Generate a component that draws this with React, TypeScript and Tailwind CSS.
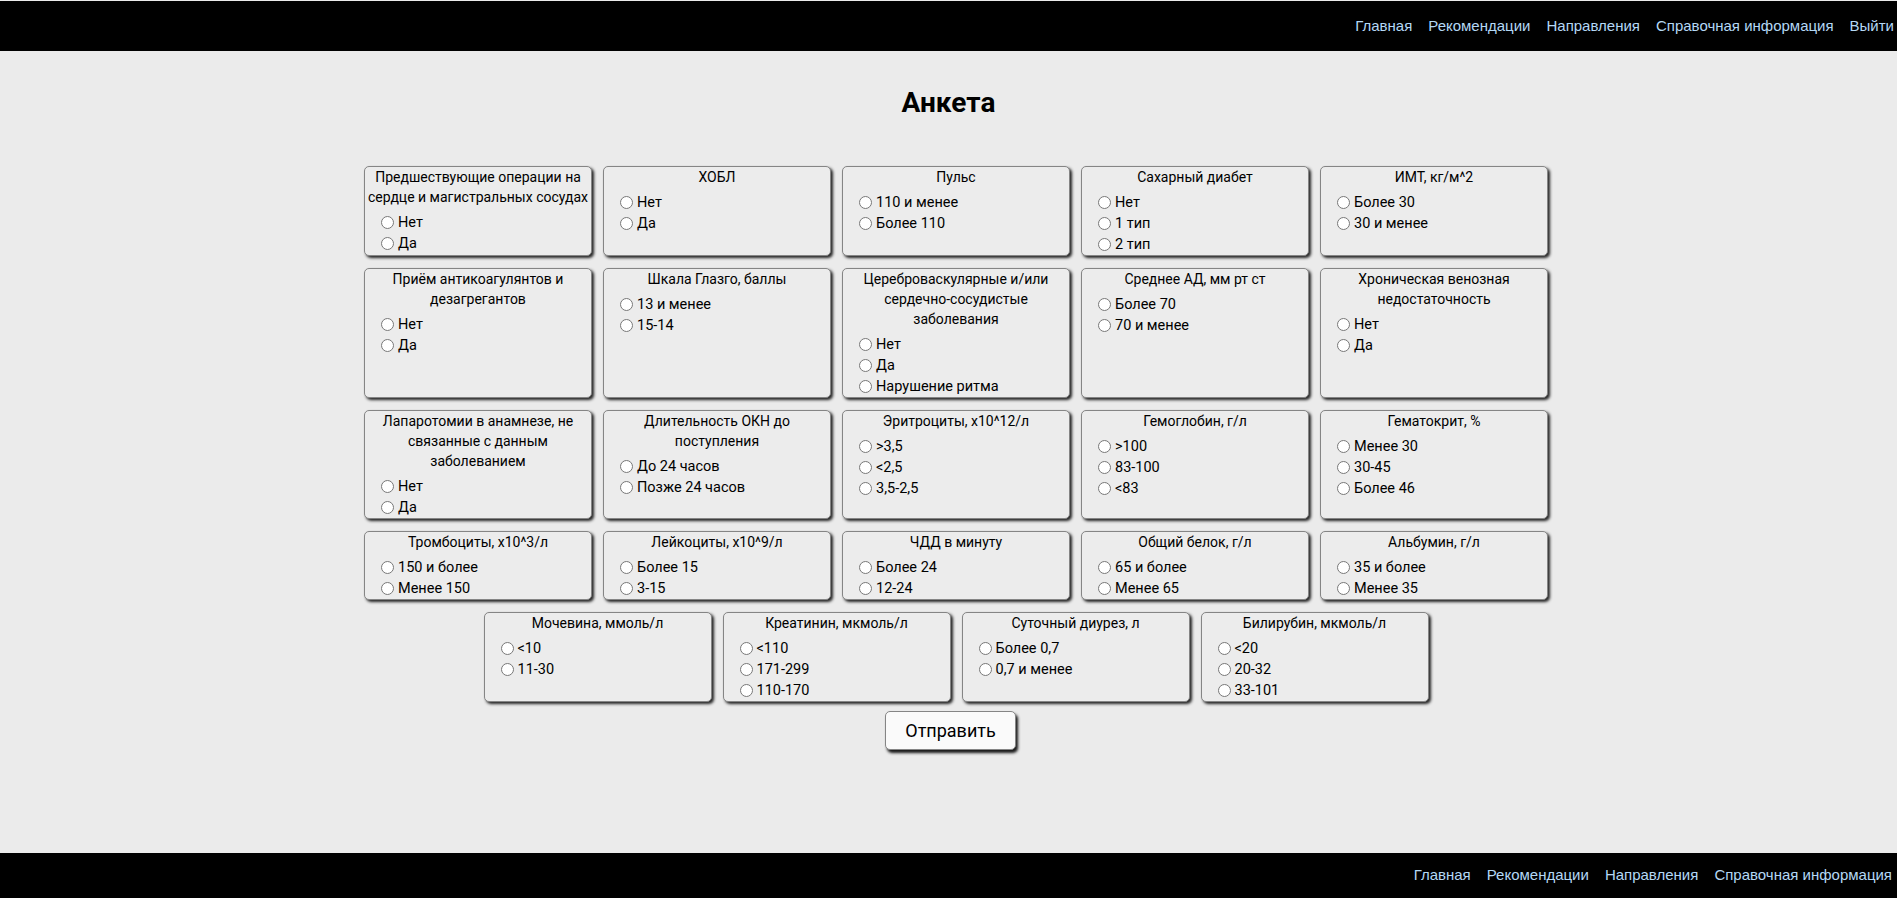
import { useState } from "react";

type Question = {
  id: string;
  title: string[];
  options: string[];
};

const questions: Question[] = [
  { id: "q1", title: ["Предшествующие операции на", "сердце и магистральных сосудах"], options: ["Нет", "Да"] },
  { id: "q2", title: ["ХОБЛ"], options: ["Нет", "Да"] },
  { id: "q3", title: ["Пульс"], options: ["110 и менее", "Более 110"] },
  { id: "q4", title: ["Сахарный диабет"], options: ["Нет", "1 тип", "2 тип"] },
  { id: "q5", title: ["ИМТ, кг/м^2"], options: ["Более 30", "30 и менее"] },
  { id: "q6", title: ["Приём антикоагулянтов и", "дезагрегантов"], options: ["Нет", "Да"] },
  { id: "q7", title: ["Шкала Глазго, баллы"], options: ["13 и менее", "15-14"] },
  {
    id: "q8",
    title: ["Цереброваскулярные и/или", "сердечно-сосудистые", "заболевания"],
    options: ["Нет", "Да", "Нарушение ритма"],
  },
  { id: "q9", title: ["Среднее АД, мм рт ст"], options: ["Более 70", "70 и менее"] },
  { id: "q10", title: ["Хроническая венозная", "недостаточность"], options: ["Нет", "Да"] },
  {
    id: "q11",
    title: ["Лапаротомии в анамнезе, не", "связанные с данным", "заболеванием"],
    options: ["Нет", "Да"],
  },
  { id: "q12", title: ["Длительность ОКН до", "поступления"], options: ["До 24 часов", "Позже 24 часов"] },
  { id: "q13", title: ["Эритроциты, х10^12/л"], options: [">3,5", "<2,5", "3,5-2,5"] },
  { id: "q14", title: ["Гемоглобин, г/л"], options: [">100", "83-100", "<83"] },
  { id: "q15", title: ["Гематокрит, %"], options: ["Менее 30", "30-45", "Более 46"] },
  { id: "q16", title: ["Тромбоциты, х10^3/л"], options: ["150 и более", "Менее 150"] },
  { id: "q17", title: ["Лейкоциты, х10^9/л"], options: ["Более 15", "3-15"] },
  { id: "q18", title: ["ЧДД в минуту"], options: ["Более 24", "12-24"] },
  { id: "q19", title: ["Общий белок, г/л"], options: ["65 и более", "Менее 65"] },
  { id: "q20", title: ["Альбумин, г/л"], options: ["35 и более", "Менее 35"] },
  { id: "q21", title: ["Мочевина, ммоль/л"], options: ["<10", "11-30"] },
  { id: "q22", title: ["Креатинин, мкмоль/л"], options: ["<110", "171-299", "110-170"] },
  { id: "q23", title: ["Суточный диурез, л"], options: ["Более 0,7", "0,7 и менее"] },
  { id: "q24", title: ["Билирубин, мкмоль/л"], options: ["<20", "20-32", "33-101"] },
];

const navLinks = ["Главная", "Рекомендации", "Направления", "Справочная информация"];

function QuestionCard({
  q,
  value,
  onChange,
}: {
  q: Question;
  value: string | undefined;
  onChange: (v: string) => void;
}) {
  return (
    <div className="w-[228px] bg-[#ececec] border border-[#858585] rounded-[5px] shadow-[2px_2px_3px_rgba(0,0,0,0.85)] text-black">
      <p className="text-center text-[14px] leading-[20px] mb-[5px]">
        {q.title.map((line, i) => (
          <span key={i} className="block whitespace-nowrap">
            {line}
          </span>
        ))}
      </p>
      <div className="pl-[16px]">
        {q.options.map((opt) => (
          <label key={opt} className="flex items-center h-[21px] text-[14.5px] cursor-pointer">
            <input
              type="radio"
              name={q.id}
              value={opt}
              checked={value === opt}
              onChange={() => onChange(opt)}
              className="w-[13px] h-[13px] mr-[4px]"
            />
            {opt}
          </label>
        ))}
      </div>
    </div>
  );
}

export default function App() {
  const [answers, setAnswers] = useState<Record<string, string>>({});

  return (
    <div
      className="min-h-screen flex flex-col bg-[#ebebeb]"
      style={{ fontFamily: "Roboto, 'Noto Sans', sans-serif" }}
    >
      <header className="mt-px h-[50px] bg-black flex justify-end items-center gap-[16px] pr-[3px] font-['Liberation_Sans',Arial,sans-serif] text-[15px] text-[#b4d8f5]">
        {navLinks.map((l) => (
          <a key={l} href="#" className="hover:underline">
            {l}
          </a>
        ))}
        <a href="#" className="hover:underline">
          Выйти
        </a>
      </header>

      <main className="flex-1 flex flex-col items-center">
        <h1 className="mt-[35px] text-[28px] leading-[33px] font-bold text-black">Анкета</h1>

        <div className="mt-[47px] w-full flex justify-center pl-[15px]">
          <div className="w-[1184px] flex flex-wrap justify-center gap-x-[11px] gap-y-[12px]">
            {questions.map((q) => (
              <QuestionCard
                key={q.id}
                q={q}
                value={answers[q.id]}
                onChange={(v) => setAnswers((a) => ({ ...a, [q.id]: v }))}
              />
            ))}
          </div>
        </div>

        <button className="mt-[9px] ml-[4px] w-[131px] h-[39px] bg-[#fafafa] border border-[#858585] rounded-[5px] shadow-[2px_3px_3px_rgba(0,0,0,0.9)] text-[18px] text-black">
          Отправить
        </button>
      </main>

      <footer className="h-[45px] bg-black flex justify-end items-center gap-[16px] pr-[5px] font-['Liberation_Sans',Arial,sans-serif] text-[15px] text-[#b4d8f5]">
        {navLinks.map((l) => (
          <a key={l} href="#" className="hover:underline">
            {l}
          </a>
        ))}
      </footer>
    </div>
  );
}
